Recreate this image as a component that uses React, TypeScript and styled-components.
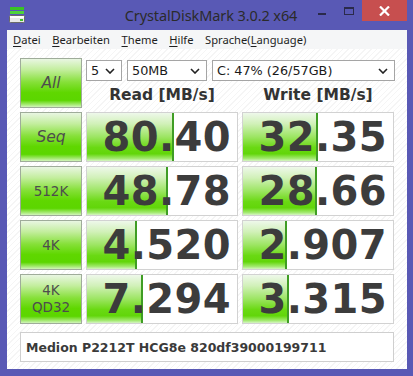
import React from "react";
import styled, { createGlobalStyle } from "styled-components";

const GlobalStyle = createGlobalStyle`
  html, body {
    margin: 0;
    padding: 0;
    background: #ffffff;
  }
  body {
    font-family: "DejaVu Sans", Verdana, sans-serif;
  }
`;

type Row = {
  label: string[];
  italic?: boolean;
  read: string;
  write: string;
};

const rows: Row[] = [
  { label: ["Seq"], italic: true, read: "80.40", write: "32.35" },
  { label: ["512K"], read: "48.78", write: "28.66" },
  { label: ["4K"], read: "4.520", write: "2.907" },
  { label: ["4K", "QD32"], read: "7.294", write: "3.315" },
];

const menuItems: [string, string, string][] = [
  ["", "D", "atei"],
  ["", "B", "earbeiten"],
  ["", "T", "heme"],
  ["", "H", "ilfe"],
  ["Sprache(", "L", "anguage)"],
];

// CrystalDiskMark meter: log scale, 5 decades over the box width
const meter = (value: string) => {
  const v = parseFloat(value) * 10;
  const pct = Math.max(0, Math.min(1, Math.log10(v) / 5));
  return `${(pct * 100).toFixed(2)}%`;
};

function AppIcon() {
  return (
    <svg width="16" height="18" viewBox="0 0 16 18">
      <rect x="1" y="1" width="14" height="3" fill="#39c424" />
      <rect x="1" y="5" width="14" height="3" fill="#4fd43a" />
      <rect x="0.5" y="9.5" width="15" height="7" rx="1" fill="#e8e8e8" stroke="#6a6a6a" />
      <rect x="1" y="10" width="14" height="2" fill="#ffffff" />
      <rect x="11" y="13" width="3" height="2" fill="#3fbf2a" />
    </svg>
  );
}

function Chevron() {
  return (
    <svg width="10" height="6" viewBox="0 0 10 6">
      <path d="M1 1 L5 5 L9 1" fill="none" stroke="#222" strokeWidth="1.6" />
    </svg>
  );
}

function App() {
  return (
    <>
      <GlobalStyle />
      <Window>
        <TitleBar>
          <IconSlot>
            <AppIcon />
          </IconSlot>
          <Title>CrystalDiskMark 3.0.2 x64</Title>
          <Controls>
            <Minimize />
            <Maximize />
            <CloseButton>
              <svg width="11" height="10" viewBox="0 0 11 10">
                <path d="M1 0.5 L10 9.5 M10 0.5 L1 9.5" stroke="#fff" strokeWidth="2.2" />
              </svg>
            </CloseButton>
          </Controls>
        </TitleBar>
        <Client>
          <MenuBar>
            {menuItems.map(([pre, key, rest]) => (
              <MenuItem key={pre + key + rest}>
                {pre}
                <u>{key}</u>
                {rest}
              </MenuItem>
            ))}
          </MenuBar>
          <Content>
            <Grid>
              <TestButton $italic>All</TestButton>
              <TopPanel>
                <SelectRow>
                  <SelectBox $width={36}>
                    <span>5</span>
                    <Chevron />
                  </SelectBox>
                  <SelectBox $width={80}>
                    <span>50MB</span>
                    <Chevron />
                  </SelectBox>
                  <SelectBox $width={181} $grow>
                    <span>C: 47% (26/57GB)</span>
                    <Chevron />
                  </SelectBox>
                </SelectRow>
                <HeaderRow>
                  <ColumnHeader>Read [MB/s]</ColumnHeader>
                  <ColumnHeader>Write [MB/s]</ColumnHeader>
                </HeaderRow>
              </TopPanel>
              {rows.map((r) => (
                <React.Fragment key={r.label.join(" ")}>
                  <TestButton $italic={r.italic}>
                    {r.label.map((l) => (
                      <span key={l}>{l}</span>
                    ))}
                  </TestButton>
                  <ResultBox>
                    <Meter style={{ width: meter(r.read) }} />
                    <Value>{r.read}</Value>
                  </ResultBox>
                  <ResultBox>
                    <Meter style={{ width: meter(r.write) }} />
                    <Value>{r.write}</Value>
                  </ResultBox>
                </React.Fragment>
              ))}
            </Grid>
            <StatusBox>Medion P2212T HCG8e 820df39000199711</StatusBox>
          </Content>
        </Client>
      </Window>
    </>
  );
}

const Window = styled.div`
  width: 413px;
  height: 376px;
  box-sizing: border-box;
  background: #5959b5;
  padding: 0 6px 7px 7px;
  display: flex;
  flex-direction: column;
`;

const TitleBar = styled.div`
  height: 30px;
  margin-left: -7px;
  margin-right: -6px;
  padding-left: 9px;
  display: grid;
  grid-template-columns: 1fr auto 1fr;
  align-items: start;
`;

const IconSlot = styled.div`
  padding-top: 6px;
  display: flex;
`;

const Title = styled.div`
  font-family: "Noto Sans", "Open Sans", sans-serif;
  font-size: 14.5px;
  color: #2b2b2b;
  line-height: 30px;
  letter-spacing: -0.1px;
`;

const Controls = styled.div`
  display: flex;
  justify-content: flex-end;
  align-items: flex-start;
  padding-right: 6px;
`;

const Minimize = styled.div`
  width: 8px;
  height: 2px;
  background: #2a2a4a;
  margin-top: 13px;
  margin-right: 18px;
`;

const Maximize = styled.div`
  width: 10px;
  height: 8px;
  box-sizing: border-box;
  border: 1px solid #2a2a4a;
  border-top-width: 2px;
  margin-top: 7px;
  margin-right: 8px;
`;

const CloseButton = styled.div`
  width: 45px;
  height: 21px;
  background: #c74f4f;
  display: flex;
  align-items: center;
  justify-content: center;
`;

const Client = styled.div`
  flex: 1;
  display: flex;
  flex-direction: column;
  background-color: #ffffff;
  background-image: repeating-linear-gradient(
    -45deg,
    #ffffff 0px,
    #ffffff 3px,
    #f5f5f5 3px,
    #f5f5f5 4px
  );
`;

const MenuBar = styled.div`
  height: 19px;
  background: #f5f6f7;
  display: flex;
  align-items: center;
  padding-left: 0;
`;

const MenuItem = styled.div`
  font-family: "Noto Sans", "Open Sans", sans-serif;
  font-size: 11.2px;
  color: #1e1e1e;
  padding: 0 5.5px 0 6px;
  line-height: 19px;

  u {
    text-decoration-thickness: 1px;
    text-underline-offset: 2px;
  }
`;

const Content = styled.div`
  padding: 9px 13px 7px 13px;
  display: flex;
  flex-direction: column;
  gap: 8px;
`;

const Grid = styled.div`
  display: grid;
  grid-template-columns: 62px 152px 152px;
  grid-auto-rows: 50px;
  column-gap: 4px;
  row-gap: 4px;
`;

const TestButton = styled.div<{ $italic?: boolean }>`
  box-sizing: border-box;
  border: 1px solid #9fac9a;
  background: linear-gradient(
    to bottom,
    #e9f6e2 0%,
    #c4ee9f 22%,
    #86e039 48%,
    #5fd700 70%,
    #5cd600 86%,
    #a6ea74 95%,
    #d2f4bc 100%
  );
  display: flex;
  flex-direction: column;
  align-items: center;
  justify-content: center;
  color: #4d4d4d;
  font-family: "DejaVu Sans", sans-serif;
  font-size: ${(p) => (p.$italic ? "15.5px" : "13.5px")};
  font-style: ${(p) => (p.$italic ? "oblique" : "normal")};
  line-height: 17px;
`;

const TopPanel = styled.div`
  grid-column: 2 / 4;
  display: flex;
  flex-direction: column;
  padding-top: 2px;
`;

const SelectRow = styled.div`
  display: flex;
  gap: 5px;
  margin-right: -1px;
`;

const SelectBox = styled.div<{ $width: number; $grow?: boolean }>`
  width: ${(p) => p.$width}px;
  flex: ${(p) => (p.$grow ? 1 : "none")};
  height: 21px;
  box-sizing: border-box;
  border: 1px solid #a5a5a5;
  background: #ffffff;
  display: flex;
  align-items: center;
  justify-content: space-between;
  padding: 0 6px 0 4px;
  font-family: "DejaVu Sans", sans-serif;
  font-size: 12.8px;
  color: #1a1a1a;
`;

const HeaderRow = styled.div`
  flex: 1;
  display: grid;
  grid-template-columns: 152px 152px;
  column-gap: 4px;
  align-items: center;
`;

const ColumnHeader = styled.div`
  text-align: center;
  font-family: "DejaVu Sans", sans-serif;
  font-weight: bold;
  font-size: 15.5px;
  color: #333333;
  padding-top: 1px;
`;

const ResultBox = styled.div`
  position: relative;
  box-sizing: border-box;
  border: 1px solid #d2d2d2;
  background: #ffffff;
  display: flex;
  align-items: center;
  justify-content: flex-end;
  overflow: hidden;
`;

// meter fill lies under the value text
const Meter = styled.div`
  position: absolute;
  left: 0;
  top: 0;
  bottom: 0;
  box-sizing: border-box;
  border-right: 2px solid #3f9d24;
  background: linear-gradient(
    to bottom,
    #eef8ea 0%,
    #d2f1ba 22%,
    #9ce562 50%,
    #6ad913 72%,
    #62d60a 85%,
    #a4ea72 95%,
    #d6f5c4 100%
  );
`;

const Value = styled.div`
  position: relative;
  font-family: "DejaVu Sans", Verdana, sans-serif;
  font-weight: bold;
  font-size: 40px;
  line-height: 48px;
  color: #3c3c3c;
  padding-right: 6px;
  letter-spacing: 0.4px;
`;

const StatusBox = styled.div`
  height: 30px;
  width: 374px;
  box-sizing: border-box;
  border: 1px solid #cfcfcf;
  background: #ffffff;
  display: flex;
  align-items: center;
  padding-left: 5px;
  font-family: "DejaVu Sans", sans-serif;
  font-weight: bold;
  font-size: 12.5px;
  color: #3a3a3a;
`;

export default App;
